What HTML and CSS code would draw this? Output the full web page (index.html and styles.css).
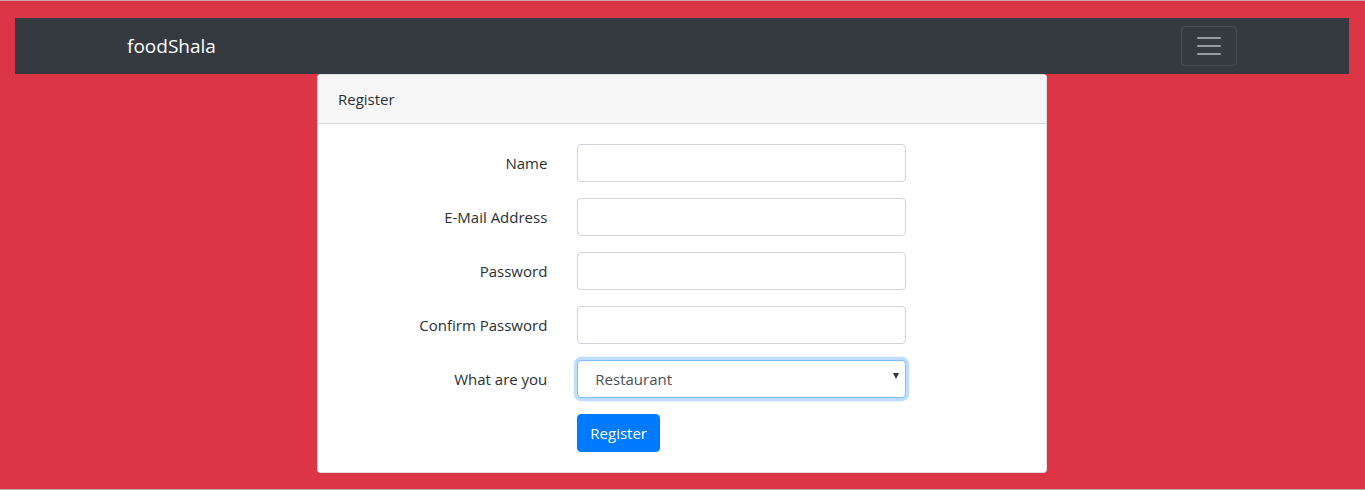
FILE: index.html
```html
<!DOCTYPE html>
<html lang="en">
<head>
<meta charset="utf-8">
<title>foodShala</title>
<link rel="stylesheet" href="styles.css">
</head>
<body>
<div class="page">
  <nav class="navbar">
    <div class="container nav-inner">
      <a class="brand" href="#">foodShala</a>
      <button class="toggler" type="button" aria-label="Toggle navigation">
        <svg width="30" height="30" viewBox="0 0 30 30"><path stroke="rgba(255,255,255,0.5)" stroke-linecap="round" stroke-miterlimit="10" stroke-width="2" d="M4 7h22M4 15h22M4 23h22"/></svg>
      </button>
    </div>
  </nav>
  <div class="container">
    <div class="card">
      <div class="card-header">Register</div>
      <div class="card-body">
        <form class="form">
          <div class="row">
            <label class="label" for="name">Name</label>
            <div class="field"><input id="name" class="control" type="text"></div>
          </div>
          <div class="row">
            <label class="label" for="email">E-Mail Address</label>
            <div class="field"><input id="email" class="control" type="email"></div>
          </div>
          <div class="row">
            <label class="label" for="pw">Password</label>
            <div class="field"><input id="pw" class="control" type="password"></div>
          </div>
          <div class="row">
            <label class="label" for="pw2">Confirm Password</label>
            <div class="field"><input id="pw2" class="control" type="password"></div>
          </div>
          <div class="row">
            <label class="label" for="role">What are you</label>
            <div class="field">
              <div class="control select focus">
                <span>Restaurant</span>
                <span class="caret"></span>
              </div>
            </div>
          </div>
          <div class="row last">
            <div class="label"></div>
            <div class="field"><button type="button" class="btn">Register</button></div>
          </div>
        </form>
      </div>
    </div>
  </div>
</div>
</body>
</html>
```

FILE: styles.css
```css
* { box-sizing: border-box; }
html, body { margin: 0; padding: 0; }
body {
  background: #dc3545;
  font-family: "Open Sans", "Noto Sans", Arial, sans-serif;
  font-size: 15px;
  line-height: 24px;
  color: #2b2f33;
}
.page {
  height: 490px;
  border-top: 1px solid #c9a9ad;
  border-bottom: 1px solid #b9a6a8;
  padding: 17px 16px 0 15px;
  overflow: hidden;
}
.navbar {
  background: #343a40;
  height: 56px;
  padding: 8px 0;
}
.container {
  width: 1110px;
  margin-left: 112px;
}
.nav-inner {
  display: flex;
  align-items: center;
  justify-content: space-between;
  height: 40px;
}
.brand {
  color: #fff;
  text-decoration: none;
  font-size: 19px;
  line-height: 30px;
}
.toggler {
  width: 56px;
  height: 40px;
  padding: 4px 12px;
  background: transparent;
  border: 1px solid rgba(255,255,255,0.1);
  border-radius: 4px;
  display: flex;
  align-items: center;
  justify-content: center;
}
.card {
  width: 730px;
  margin-left: 190px;
  background: #fff;
  border: 1px solid rgba(0,0,0,0.125);
  border-radius: 4px;
}
.card-header {
  padding: 12px 20px;
  background: #f7f7f7;
  border-bottom: 1px solid rgba(0,0,0,0.125);
  border-radius: 4px 4px 0 0;
  height: 49px;
}
.card-body { padding: 20px; }
.form { margin: 0 -15px; }
.row {
  display: flex;
  margin-bottom: 16px;
}
.row.last { margin-bottom: 0; }
.label {
  width: 239.33px;
  padding: 7px 15px;
  text-align: right;
  flex: none;
}
.field {
  width: 359px;
  padding: 0 15px;
  flex: none;
}
.control {
  display: block;
  width: 100%;
  height: 38px;
  padding: 6px 12px;
  font: inherit;
  color: #495057;
  background: #fff;
  border: 1px solid #ced4da;
  border-radius: 4px;
}
.select {
  display: flex;
  align-items: center;
  justify-content: space-between;
  padding: 6px 6px 6px 17px;
}
.focus {
  border-color: #80bdff;
  box-shadow: 0 0 0 3.2px rgba(0,123,255,0.25);
}
.caret {
  width: 0;
  height: 0;
  border-left: 3.5px solid transparent;
  border-right: 3.5px solid transparent;
  border-top: 6px solid #333;
  margin-top: -6px;
}
.btn {
  height: 38px;
  padding: 6px 12px;
  font: inherit;
  color: #fff;
  background: #007bff;
  border: 1px solid #007bff;
  border-radius: 4px;
}
```
